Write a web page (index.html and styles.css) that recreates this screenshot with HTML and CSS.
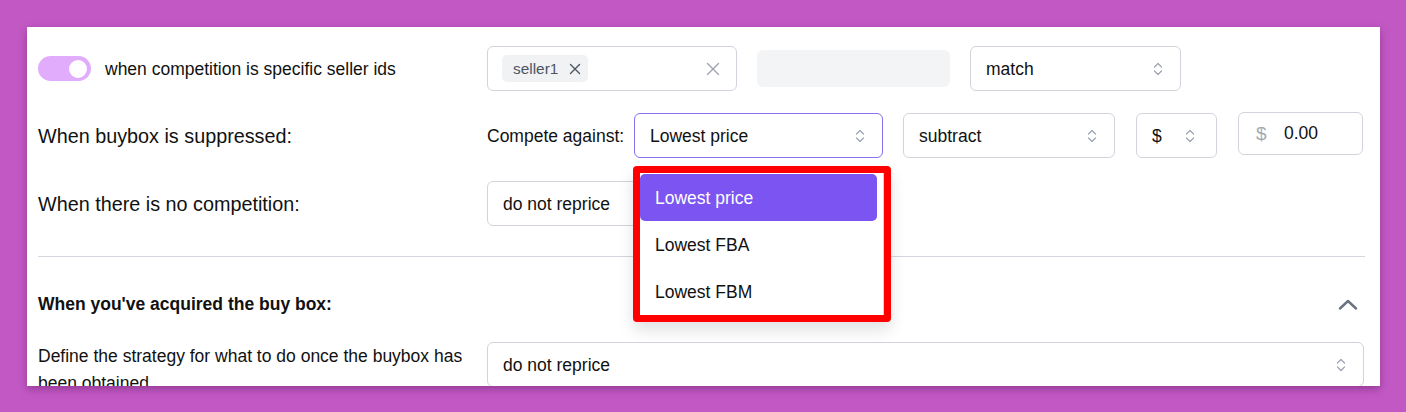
FILE: index.html
```html
<!DOCTYPE html>
<html>
<head>
<meta charset="utf-8">
<link rel="stylesheet" href="styles.css">
</head>
<body>
<div class="card">
  <div class="row row1">
    <div class="left toggle-wrap">
      <span class="toggle"><span class="knob"></span></span>
      <span class="toggle-text">when competition is specific seller ids</span>
    </div>
    <div class="controls">
      <div class="multi">
        <span class="chip">seller1
          <svg class="x-small" viewBox="0 0 12 12" width="12" height="12"><path d="M1.5 1.5L10.5 10.5M10.5 1.5L1.5 10.5" stroke="#4b5563" stroke-width="1.4" fill="none" stroke-linecap="round"/></svg>
        </span>
        <svg class="x-clear" viewBox="0 0 14 14" width="14" height="14"><path d="M1.5 1.5L12.5 12.5M12.5 1.5L1.5 12.5" stroke="#9ca3af" stroke-width="1.4" fill="none" stroke-linecap="round"/></svg>
      </div>
      <div class="disabled-input"></div>
      <div class="select w-match"><span>match</span>
        <svg class="updown" viewBox="0 0 10 14" width="10" height="14"><path d="M1.5 5L5 1.5L8.5 5M1.5 9L5 12.5L8.5 9" stroke="#9ca3af" stroke-width="1.2" fill="none" stroke-linecap="round" stroke-linejoin="round"/></svg>
      </div>
    </div>
  </div>

  <div class="row row2">
    <div class="left label">When buybox is suppressed:</div>
    <div class="controls">
      <span class="inline-label">Compete against:</span>
      <div class="select focused w-compete"><span>Lowest price</span>
        <svg class="updown" viewBox="0 0 10 14" width="10" height="14"><path d="M1.5 5L5 1.5L8.5 5M1.5 9L5 12.5L8.5 9" stroke="#9ca3af" stroke-width="1.2" fill="none" stroke-linecap="round" stroke-linejoin="round"/></svg>
      </div>
      <div class="select w-subtract"><span>subtract</span>
        <svg class="updown" viewBox="0 0 10 14" width="10" height="14"><path d="M1.5 5L5 1.5L8.5 5M1.5 9L5 12.5L8.5 9" stroke="#9ca3af" stroke-width="1.2" fill="none" stroke-linecap="round" stroke-linejoin="round"/></svg>
      </div>
      <div class="select w-currency"><span>$</span>
        <svg class="updown" viewBox="0 0 10 14" width="10" height="14"><path d="M1.5 5L5 1.5L8.5 5M1.5 9L5 12.5L8.5 9" stroke="#9ca3af" stroke-width="1.2" fill="none" stroke-linecap="round" stroke-linejoin="round"/></svg>
      </div>
      <div class="amount"><span class="prefix">$</span><span class="value">0.00</span></div>
    </div>
  </div>

  <div class="row row3">
    <div class="left label">When there is no competition:</div>
    <div class="controls">
      <div class="select w-noreprice"><span>do not reprice</span></div>
    </div>
  </div>

  <div class="divider"></div>

  <div class="section-head">
    <span class="section-title">When you've acquired the buy box:</span>
    <svg class="chev-up" viewBox="0 0 20 11" width="20" height="11"><path d="M2 9.5L10 2L18 9.5" stroke="#6b7280" stroke-width="2.4" fill="none" stroke-linecap="round" stroke-linejoin="round"/></svg>
  </div>

  <div class="row row4">
    <div class="left desc">Define the strategy for what to do once the buybox has been obtained</div>
    <div class="controls grow">
      <div class="select w-full"><span>do not reprice</span>
        <svg class="updown" viewBox="0 0 10 14" width="10" height="14"><path d="M1.5 5L5 1.5L8.5 5M1.5 9L5 12.5L8.5 9" stroke="#9ca3af" stroke-width="1.2" fill="none" stroke-linecap="round" stroke-linejoin="round"/></svg>
      </div>
    </div>
  </div>

  <div class="dropdown">
    <div class="list">
      <div class="opt active">Lowest price</div>
      <div class="opt">Lowest FBA</div>
      <div class="opt">Lowest FBM</div>
    </div>
  </div>
</div>
</body>
</html>
```

FILE: styles.css
```css
html, body {
  margin: 0;
  padding: 0;
}
body {
  background: #c258c4;
  font-family: "Liberation Sans", Arial, Helvetica, sans-serif;
  color: #111111;
  font-size: 17.5px;
  padding: 27px 26px 0 27px;
  height: 412px;
  box-sizing: border-box;
}
.card {
  position: relative;
  background: #ffffff;
  height: 359px;
  overflow: hidden;
  box-sizing: border-box;
  padding: 19px 15px 0 11px;
  box-shadow: 0 3px 8px rgba(60, 0, 60, 0.35);
}
.row {
  display: flex;
  align-items: center;
}
.left {
  width: 449px;
  flex: none;
  box-sizing: border-box;
}
.controls {
  display: flex;
  align-items: center;
}
.grow {
  flex: 1;
}
.row1 {
  height: 45px;
}
.row2 {
  height: 45px;
  margin-top: 22px;
}
.row3 {
  height: 45px;
  margin-top: 23px;
}
.toggle-wrap {
  display: flex;
  align-items: center;
}
.toggle {
  width: 53px;
  height: 25px;
  border-radius: 13px;
  background: #e1acfc;
  display: flex;
  align-items: center;
  justify-content: flex-end;
  padding-right: 4px;
  box-sizing: border-box;
  margin-right: 14px;
}
.knob {
  width: 18px;
  height: 18px;
  border-radius: 50%;
  background: #ffffff;
}
.toggle-text {
  font-size: 17.5px;
  padding-top: 1px;
}
.label {
  font-size: 19.8px;
  padding-top: 1px;
}
.multi {
  width: 250px;
  height: 45px;
  box-sizing: border-box;
  border: 1px solid #d1d5db;
  border-radius: 6px;
  display: flex;
  align-items: center;
  justify-content: space-between;
  padding: 0 16px 0 14px;
}
.chip {
  height: 27px;
  background: #f1f2f4;
  border-radius: 5px;
  display: flex;
  align-items: center;
  padding: 0 7px 0 11px;
  font-size: 15.4px;
  color: #4b5563;
}
.x-small {
  margin-left: 11px;
}
.disabled-input {
  width: 193px;
  height: 37px;
  background: #f3f4f6;
  border-radius: 6px;
  margin-left: 20px;
}
.select {
  height: 45px;
  box-sizing: border-box;
  border: 1px solid #d1d5db;
  border-radius: 6px;
  display: flex;
  align-items: center;
  justify-content: space-between;
  padding: 1px 17px 0 15px;
  background: #ffffff;
}
.select.focused {
  border-color: #8a6ff0;
}
.w-match {
  width: 211px;
  margin-left: 20px;
}
.inline-label {
  width: 147px;
  flex: none;
  font-size: 17.5px;
  padding-top: 1px;
}
.w-compete {
  width: 249px;
}
.w-subtract {
  width: 212px;
  margin-left: 20px;
}
.w-currency {
  width: 81px;
  margin-left: 21px;
  padding-right: 21px;
}
.amount {
  width: 125px;
  height: 43px;
  box-sizing: border-box;
  border: 1px solid #d1d5db;
  border-radius: 6px;
  margin-left: 21px;
  margin-top: -4px;
  display: flex;
  align-items: center;
  padding-left: 17px;
}
.prefix {
  color: #a3a9b3;
  font-size: 19px;
  width: 28px;
}
.w-noreprice {
  width: 253px;
}
.divider {
  height: 1px;
  background: #d4d8de;
  margin-top: 30px;
}
.section-head {
  display: flex;
  align-items: center;
  justify-content: space-between;
  margin-top: 37px;
  height: 20px;
  padding-right: 7px;
}
.section-title {
  font-weight: bold;
  font-size: 17.5px;
}
.row4 {
  align-items: flex-start;
  margin-top: 28px;
}
.desc {
  padding-right: 20px;
  line-height: 26.5px;
  padding-top: 1px;
}
.w-full {
  width: 877px;
}
.dropdown {
  position: absolute;
  left: 606px;
  top: 139px;
  width: 258px;
  height: 156px;
  box-sizing: border-box;
  border: 7px solid #ff0000;
  border-radius: 4px;
  background: #ffffff;
  box-shadow: 0 8px 16px rgba(0, 0, 0, 0.12);
  overflow: hidden;
}
.list {
  height: 100%;
  box-sizing: border-box;
  padding: 1px 6px 0 0;
  border-right: 1px solid #d1d5db;
}
.opt {
  height: 47px;
  display: flex;
  align-items: center;
  padding: 1px 0 0 15px;
  box-sizing: border-box;
  font-size: 17.5px;
  color: #111111;
}
.opt.active {
  background: #7b54f1;
  color: #ffffff;
  border-radius: 5px;
}
```
